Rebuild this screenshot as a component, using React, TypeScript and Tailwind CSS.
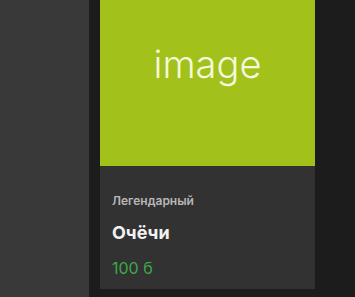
const App = () => {
  return (
    <div
      className="flex h-[297px] w-[355px] overflow-hidden bg-[#1c1c1c]"
      style={{ fontFamily: "Inter, 'Noto Sans', sans-serif" }}
    >
      <div className="w-[89px] shrink-0 bg-[#393939]" />
      <div className="flex flex-1 flex-col pl-[11px]">
        <div className="flex w-[215px] flex-col">
          <div className="flex h-[166px] items-center justify-center bg-[#a2c11b] pb-[38px]">
            <span className="text-[38px] font-light text-[#f4f8dc]">image</span>
          </div>
          <div className="flex h-[123px] flex-col bg-[#323232] px-3 pt-[27px]">
            <p className="text-[12px] font-semibold leading-[15px] text-[#b8b8b8]">Легендарный</p>
            <p className="mt-[14px] text-[18px] font-bold leading-[22px] text-[#f2f2f2]">Очёчи</p>
            <p className="mt-[14px] text-[16px] leading-[20px] text-[#3ea84a]">100 б</p>
          </div>
        </div>
      </div>
    </div>
  );
};

export default App;
